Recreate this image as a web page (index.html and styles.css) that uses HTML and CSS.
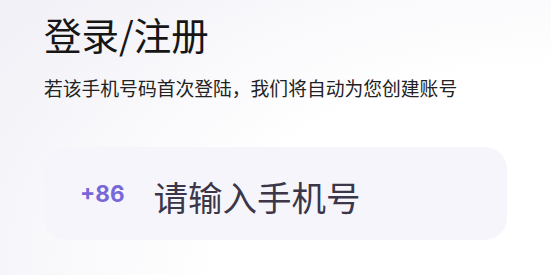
FILE: index.html
```html
<!DOCTYPE html>
<html lang="zh-CN">
<head>
<meta charset="utf-8">
<title>登录/注册</title>
<link rel="stylesheet" href="styles.css">
</head>
<body>
<main class="page">
  <h1 class="title">登录/注册</h1>
  <p class="hint">若该手机号码首次登陆，我们将自动为您创建账号</p>
  <label class="phone-field">
    <span class="code">+86</span>
    <input class="phone-input" type="tel" placeholder="请输入手机号">
  </label>
</main>
</body>
</html>
```

FILE: styles.css
```css
html, body {
  margin: 0;
  padding: 0;
}
body {
  width: 551px;
  height: 275px;
  overflow: hidden;
  font-family: "Noto Sans CJK SC", "Noto Sans", sans-serif;
  background: radial-gradient(ellipse 120% 150% at 100% 100%, #ffffff 50%, #f2f1f7 100%);
}
.page {
  display: flex;
  flex-direction: column;
  align-items: flex-start;
  padding: 15px 0 0 44px;
}
.title {
  margin: 0;
  font-size: 37.5px;
  line-height: 38px;
  font-weight: 400;
  color: #161616;
}
.hint {
  margin: 25px 0 0;
  font-size: 18.8px;
  line-height: 19px;
  color: #222222;
}
.phone-field {
  box-sizing: border-box;
  margin-top: 50px;
  width: 463px;
  height: 93px;
  border-radius: 22px;
  background: #f7f5fc;
  display: flex;
  align-items: center;
  gap: 29px;
  padding-left: 36px;
}
.code {
  font-family: Inter, Roboto, sans-serif;
  font-weight: 700;
  font-size: 22.5px;
  color: #7767d8;
}
.phone-input {
  flex: 1;
  min-width: 0;
  border: none;
  outline: none;
  background: transparent;
  padding: 5px 0 0;
  font-family: "Noto Sans CJK SC", sans-serif;
  font-size: 34.5px;
  color: #3a3647;
}
.phone-input::placeholder {
  color: #3b3748;
  opacity: 1;
}
```
